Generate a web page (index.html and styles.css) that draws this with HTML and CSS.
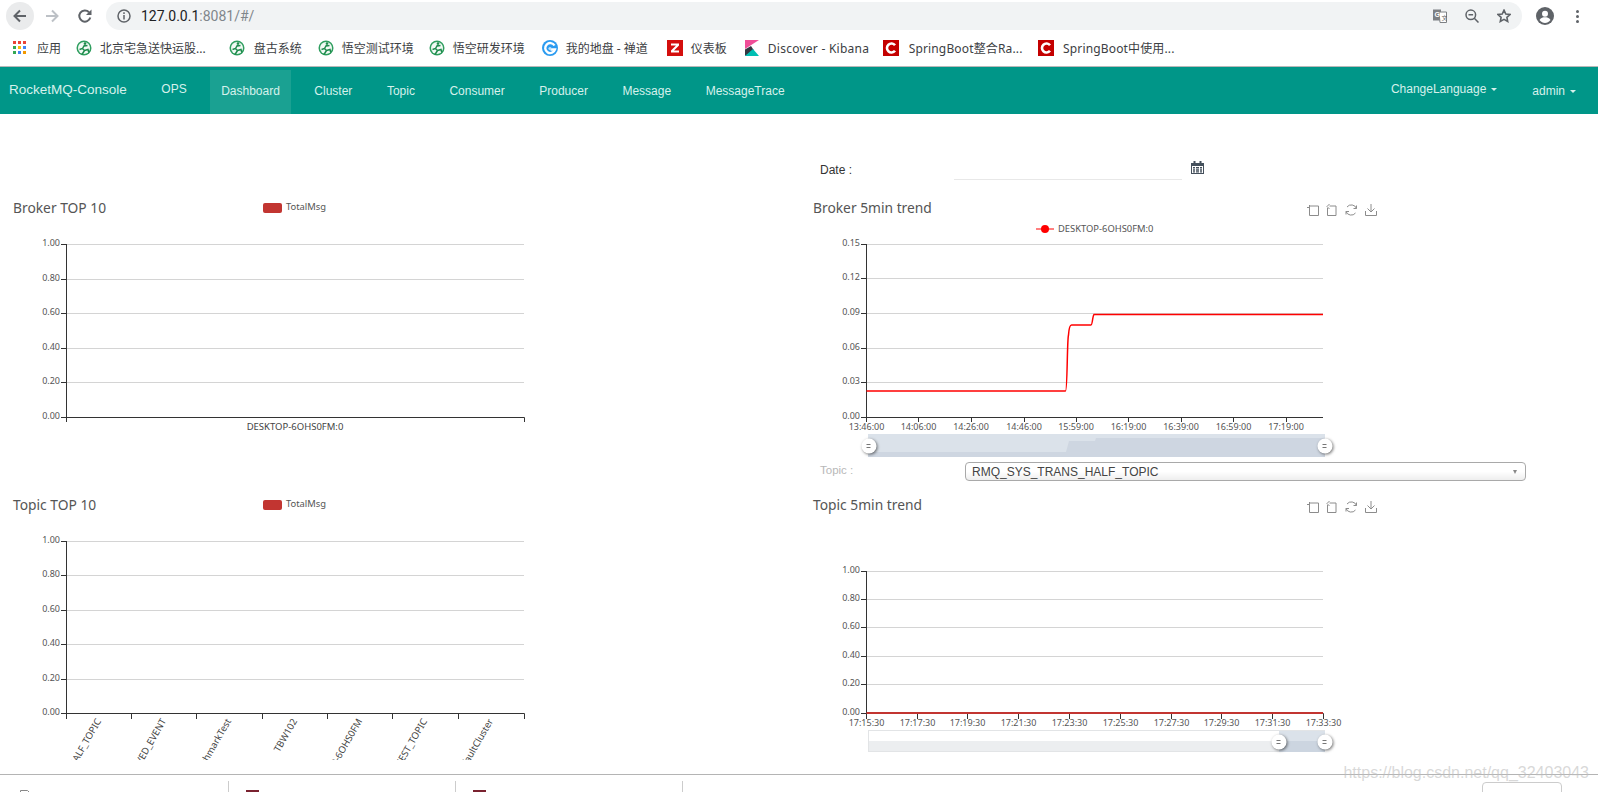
FILE: index.html
```html
<!DOCTYPE html>
<html lang="en">
<head>
<meta charset="utf-8">
<title>RocketMQ-Console</title>
<link rel="stylesheet" href="styles.css">
</head>
<body>
<div class="page">
  <header class="chrome">
    <div class="toolbar">
      <div class="tbtn back"><svg viewBox="0 0 16 16" class="ico16"><path class="s-dark" d="M14 8H3M8 2.500 2.500 8 8 13.500"/></svg></div>
      <div class="tbtn"><svg viewBox="0 0 16 16" class="ico16"><path class="s-light" d="M2 8h11M8 2.500 13.500 8 8 13.500"/></svg></div>
      <div class="tbtn"><svg viewBox="0 0 16 16" class="ico16"><path class="s-dark" d="M13.300 9.500A5.600 5.600 0 1 1 12 4.200"/><path class="f-dark" d="M14.500 1.500v5.500H9z"/></svg></div>
      <div class="address">
        <svg viewBox="0 0 14 14" class="ico14"><circle class="s-thin" cx="7" cy="7" r="6"/><path class="s-thin" d="M7 6v4.500M7 3.300v1.600"/></svg>
        <span class="url">127.0.0.1<span class="url-muted">:8081/#/</span></span>
        <div class="addr-icons">
          <svg viewBox="0 0 14 14" class="ico14"><rect class="f-grey" x="0" y="0.500" width="8" height="11"/><path class="s-grey" d="M6 3h7.500v10.500H7z"/><text x="1.500" y="8" class="tr-g">G</text><text x="8.500" y="10.500" class="tr-x">文</text></svg>
          <svg viewBox="0 0 14 14" class="ico14"><circle class="s-thin" cx="5.800" cy="5.800" r="4.800"/><path class="s-thin" d="M9.300 9.300 13.500 13.500M3.500 5.800h4.600"/></svg>
          <svg viewBox="0 0 14 14" class="ico14"><path class="s-thin2" d="M7 1.200 8.800 5l4.200.5-3.100 2.800.8 4.200L7 10.400l-3.700 2.100.8-4.200L1 5.500 5.200 5z"/></svg>
        </div>
      </div>
      <svg viewBox="0 0 18 18" class="avatar"><circle class="f-dark" cx="9" cy="9" r="9"/><circle class="f-white" cx="9" cy="6.800" r="3"/><path class="f-white" d="M3.500 13c1.500-2.200 3.500-2.700 5.500-2.700s4 .5 5.500 2.700C13 15 11 16 9 16s-4-1-5.500-3z"/></svg>
      <div class="dots"><i></i><i></i><i></i></div>
    </div>
    <div class="bookmarks">
      <div class="bm">
        <svg viewBox="0 0 14 14" class="bm-ico apps">
          <rect x="0" y="0" width="3" height="3" fill="#ea4335"/><rect x="5" y="0" width="3" height="3" fill="#ea4335"/><rect x="10" y="0" width="3" height="3" fill="#ea4335"/>
          <rect x="0" y="5" width="3" height="3" fill="#34a853"/><rect x="5" y="5" width="3" height="3" fill="#fbbc05"/><rect x="10" y="5" width="3" height="3" fill="#4285f4"/>
          <rect x="0" y="10" width="3" height="3" fill="#34a853"/><rect x="5" y="10" width="3" height="3" fill="#4285f4"/><rect x="10" y="10" width="3" height="3" fill="#f29900"/>
        </svg>
        <span>应用</span>
      </div>
      <div class="bm bm-wide">
        <svg class="bm-ico" viewBox="0 0 16 16"><use href="#wk"/></svg>
        <span>北京宅急送快运股...</span>
      </div>
      <div class="bm bm-m2">
        <svg class="bm-ico" viewBox="0 0 16 16"><defs><g id="wk"><circle cx="8" cy="8" r="7.500" fill="#2f9e5f"/><circle cx="8" cy="8" r="6" fill="#f2faf5"/><circle cx="9" cy="3.600" r="1.300" fill="#1f8a4c"/><path d="M8.500 5 6.500 8.500 3.500 9.500M6.500 8.500l2 2-2.500 4M8.500 10.500 12 9.500l.8 3M8 6l3.500-.5" fill="none" stroke="#1f8a4c" stroke-width="1.500"/></g></defs><use href="#wk"/></svg>
        <span class="bm-shift">盘古系统</span>
      </div>
      <div class="bm">
        <svg class="bm-ico" viewBox="0 0 16 16"><use href="#wk"/></svg>
        <span>悟空测试环境</span>
      </div>
      <div class="bm bm-m2">
        <svg class="bm-ico" viewBox="0 0 16 16"><use href="#wk"/></svg>
        <span>悟空研发环境</span>
      </div>
      <div class="bm bm-m2">
        <svg class="bm-ico" viewBox="0 0 16 16"><circle cx="8" cy="8" r="8" fill="#2b9bf0"/><path d="M12.500 5.500A5 5 0 1 0 13 9.500H8.500" fill="none" stroke="#fff" stroke-width="2.400"/><circle cx="8" cy="8.500" r="1.600" fill="#bfe3fb"/></svg>
        <span>我的地盘 - 禅道</span>
      </div>
      <div class="bm bm-gap bm-m1">
        <svg class="bm-ico" viewBox="0 0 16 16"><rect width="16" height="16" fill="#d40e0d"/><path d="M4 3.500h8v2l-5 5h5v2H4v-2l5-5H4z" fill="#fff"/></svg>
        <span>仪表板</span>
      </div>
      <div class="bm bm-gap bm-kibana">
        <svg class="bm-ico kib" viewBox="0 0 14 16"><path d="M0 0h14L0 9z" fill="#f04e98"/><path d="M0 9.500 6 6l3 4.500-9 5.500z" fill="#343741"/><path d="M0 16h14L8 9z" fill="#00bfb3"/></svg>
        <span>Discover - Kibana</span>
      </div>
      <div class="bm bm-spring">
        <svg class="bm-ico" viewBox="0 0 16 16"><rect width="16" height="16" fill="#c40000"/><path d="M12 5.200A4.500 4.500 0 1 0 12 10.800" fill="none" stroke="#fff" stroke-width="2.600"/></svg>
        <span>SpringBoot整合Ra...</span>
      </div>
      <div class="bm bm-spring">
        <svg class="bm-ico" viewBox="0 0 16 16"><rect width="16" height="16" fill="#c40000"/><path d="M12 5.200A4.500 4.500 0 1 0 12 10.800" fill="none" stroke="#fff" stroke-width="2.600"/></svg>
        <span>SpringBoot中使用...</span>
      </div>
    </div>
  </header>

  <nav class="nav">
    <a class="nav-item brand raised">RocketMQ-Console</a>
    <a class="nav-item raised">OPS</a>
    <a class="nav-item active">Dashboard</a>
    <a class="nav-item">Cluster</a>
    <a class="nav-item">Topic</a>
    <a class="nav-item">Consumer</a>
    <a class="nav-item">Producer</a>
    <a class="nav-item">Message</a>
    <a class="nav-item">MessageTrace</a>
    <a class="nav-item raised lang">ChangeLanguage<i class="caret"></i></a>
    <a class="nav-item user">admin<i class="caret"></i></a>
  </nav>

  <main class="dashboard">
    <section class="col col-left">
      <svg class="chart chart-broker" viewBox="0 190 800 300">
        <text class="title" x="13" y="213">Broker TOP 10</text>
        <rect class="swatch" x="263" y="203" width="19" height="10" rx="2"/>
        <text class="legend" x="286" y="210">TotalMsg</text>
        <path class="grid" d="M66 244.500H524M66 279.500H524M66 313.500H524M66 348.500H524M66 382.500H524"/>
        <path class="axis" d="M66.500 244V417.500H524.500V422M61 244.500H66M61 279.500H66M61 313.500H66M61 348.500H66M61 382.500H66M61 417.500H66M66.500 417V422"/>
        <text class="tick end" x="60" y="246">1.00</text>
        <text class="tick end" x="60" y="281">0.80</text>
        <text class="tick end" x="60" y="315">0.60</text>
        <text class="tick end" x="60" y="350">0.40</text>
        <text class="tick end" x="60" y="384">0.20</text>
        <text class="tick end" x="60" y="419">0.00</text>
        <text class="cat mid" x="295" y="429.500">DESKTOP-6OHS0FM:0</text>
      </svg>
      <svg class="chart chart-topic" viewBox="0 490 800 270">
        <text class="title" x="13" y="510">Topic TOP 10</text>
        <rect class="swatch" x="263" y="500" width="19" height="10" rx="2"/>
        <text class="legend" x="286" y="507">TotalMsg</text>
        <path class="grid" d="M66 541.500H524M66 575.500H524M66 610.500H524M66 644.500H524M66 679.500H524"/>
        <path class="axis" d="M66.500 541V713.500H524.500V719M61 541.500H66M61 575.500H66M61 610.500H66M61 644.500H66M61 679.500H66M61 713.500H66M66.500 713V719M131.500 713V719M196.500 713V719M262.500 713V719M327.500 713V719M392.500 713V719M458.500 713V719"/>
        <text class="tick end" x="60" y="543">1.00</text>
        <text class="tick end" x="60" y="577">0.80</text>
        <text class="tick end" x="60" y="612">0.60</text>
        <text class="tick end" x="60" y="646">0.40</text>
        <text class="tick end" x="60" y="681">0.20</text>
        <text class="tick end" x="60" y="715">0.00</text>
        <text class="cat end" transform="translate(101.500 721) rotate(-60)">RMQ_SYS_TRANS_HALF_TOPIC</text>
        <text class="cat end" transform="translate(166.500 721) rotate(-60)">OFFSET_MOVED_EVENT</text>
        <text class="cat end" transform="translate(231.500 721) rotate(-60)">BenchmarkTest</text>
        <text class="cat end" transform="translate(297.500 721) rotate(-60)">TBW102</text>
        <text class="cat end" transform="translate(362.500 721) rotate(-60)">DESKTOP-6OHS0FM</text>
        <text class="cat end" transform="translate(427.500 721) rotate(-60)">SELF_TEST_TOPIC</text>
        <text class="cat end" transform="translate(493.500 721) rotate(-60)">DefaultCluster</text>
      </svg>
    </section>

    <section class="col col-right">
      <div class="date-row">
        <label class="date-label">Date :</label>
        <div class="date-input"></div>
        <svg viewBox="0 0 13 13" class="cal"><path class="f-cal" d="M0 2h2.500V0h2v2h4V0h2v2H13v11H0zM1 5v7h11V5z"/><path class="f-cal" d="M2 6h2v1.500H2zM5 6h3v1.500H5zM9 6h2v1.500H9zM2 8.300h2v1.500H2zM5 8.300h3v1.500H5zM9 8.300h2v1.500H9zM2 10.300h2V11.500H2zM5 10.300h3V11.500H5zM9 10.300h2V11.500H9z"/></svg>
      </div>
      <svg class="chart chart-trend" viewBox="800 190 798 270">
        <defs>
          <g id="tools">
            <path d="M1307 207.500h3M1309.500 205v10.500h9v-9.500h-9"/>
            <path d="M1327.500 208v7.500h8.500v-9.500h-6.500M1329.500 204l-2.500 2.500 2.500 2.500"/>
            <path d="M1347 207a5.500 5.500 0 0 1 9.500 1.500M1355.500 213a5.500 5.500 0 0 1-9.500-1.500M1356.500 205.500v3h-3M1346 214.500v-3h3"/>
            <path d="M1371 204v8M1367.500 208.500l3.500 3.500 3.500-3.500M1365.500 211v4.500h11V211"/>
          </g>
          <g id="handle">
            <circle class="handle-disc" cx="0" cy="0" r="7.500"/>
            <path class="handle-mark" d="M-2.500-1.500h4M-2.500 1.500h4"/>
          </g>
        </defs>
        <text class="title" x="813" y="213">Broker 5min trend</text>
        <use href="#tools" class="tools"/>
        <path class="legend-line" d="M1036 229H1054"/>
        <circle class="dot" cx="1045" cy="229" r="4"/>
        <text class="legend" x="1058" y="232">DESKTOP-6OHS0FM:0</text>
        <path class="grid" d="M866 244.500H1323M866 278.500H1323M866 313.500H1323M866 348.500H1323M866 382.500H1323"/>
        <path class="axis" d="M866.500 244V417.500H1323M861 244.500H866M861 278.500H866M861 313.500H866M861 348.500H866M861 382.500H866M861 417.500H866M866.500 417V422M918.500 417V422M971.500 417V422M1024.500 417V422M1076.500 417V422M1128.500 417V422M1181.500 417V422M1233.500 417V422M1286.500 417V422"/>
        <text class="tick end" x="860" y="246">0.15</text>
        <text class="tick end" x="860" y="280">0.12</text>
        <text class="tick end" x="860" y="315">0.09</text>
        <text class="tick end" x="860" y="350">0.06</text>
        <text class="tick end" x="860" y="384">0.03</text>
        <text class="tick end" x="860" y="419">0.00</text>
        <path class="series" d="M866.500 391H1065.500C1067.500 391 1067 340 1068.500 335C1069 328 1070 325 1071.500 325H1091C1092.500 325 1092.500 316 1094 314.500H1323"/>
        <text class="tick mid" x="866.500" y="430">13:46:00</text>
        <text class="tick mid" x="918.500" y="430">14:06:00</text>
        <text class="tick mid" x="971" y="430">14:26:00</text>
        <text class="tick mid" x="1024" y="430">14:46:00</text>
        <text class="tick mid" x="1076" y="430">15:59:00</text>
        <text class="tick mid" x="1128.500" y="430">16:19:00</text>
        <text class="tick mid" x="1181" y="430">16:39:00</text>
        <text class="tick mid" x="1233.500" y="430">16:59:00</text>
        <text class="tick mid" x="1286" y="430">17:19:00</text>
        <rect class="dz-sel" x="868" y="434" width="457" height="23"/>
        <path class="dz-area" d="M868 452H1066L1069 441H1095L1096 438H1325V457H868z"/>
        <use href="#handle" transform="translate(869 446)"/>
        <use href="#handle" transform="translate(1325 446)"/>
      </svg>
      <div class="select-row">
        <label class="select-label">Topic :</label>
        <div class="select-box">RMQ_SYS_TRANS_HALF_TOPIC<i class="select-arrow"></i></div>
      </div>
      <svg class="chart chart-topic" viewBox="800 490 798 270">
        <text class="title" x="813" y="510">Topic 5min trend</text>
        <use href="#tools" class="tools" transform="translate(0 297)"/>
        <path class="grid" d="M866 571.500H1323M866 599.500H1323M866 627.500H1323M866 656.500H1323M866 684.500H1323"/>
        <path class="axis" d="M866.500 571V713.500H1323.500V719M861 571.500H866M861 599.500H866M861 627.500H866M861 656.500H866M861 684.500H866M861 713.500H866M866.500 713V719M917.500 713V719M967.500 713V719M1018.500 713V719M1069.500 713V719M1120.500 713V719M1171.500 713V719M1221.500 713V719M1272.500 713V719"/>
        <text class="tick end" x="860" y="573">1.00</text>
        <text class="tick end" x="860" y="601">0.80</text>
        <text class="tick end" x="860" y="629">0.60</text>
        <text class="tick end" x="860" y="658">0.40</text>
        <text class="tick end" x="860" y="686">0.20</text>
        <text class="tick end" x="860" y="715">0.00</text>
        <path class="series-flat" d="M866.500 713H1323"/>
        <text class="tick mid" x="866.500" y="726">17:15:30</text>
        <text class="tick mid" x="917.500" y="726">17:17:30</text>
        <text class="tick mid" x="967.500" y="726">17:19:30</text>
        <text class="tick mid" x="1018.500" y="726">17:21:30</text>
        <text class="tick mid" x="1069.500" y="726">17:23:30</text>
        <text class="tick mid" x="1120.500" y="726">17:25:30</text>
        <text class="tick mid" x="1171.500" y="726">17:27:30</text>
        <text class="tick mid" x="1221.500" y="726">17:29:30</text>
        <text class="tick mid" x="1272.500" y="726">17:31:30</text>
        <text class="tick mid" x="1323.500" y="726">17:33:30</text>
        <rect class="dz-frame" x="868.500" y="730.500" width="456" height="21"/>
        <rect class="dz-low" x="869" y="741" width="455" height="10"/>
        <rect class="dz-sel" x="1279" y="731" width="46" height="10"/>
        <rect class="dz-area-flat" x="1279" y="741" width="46" height="11"/>
        <use href="#handle" transform="translate(1279 742)"/>
        <use href="#handle" transform="translate(1325 742)"/>
      </svg>
    </section>
  </main>

  <footer class="downloads">
    <div class="dl dl-first"><svg viewBox="0 0 10 3" class="dl-doc"><path d="M.5 3V.5h7L9.500 2.500V3"/></svg></div>
    <div class="dl"><i class="dl-book"></i></div>
    <div class="dl"><i class="dl-book"></i></div>
    <div class="dl-btn"></div>
  </footer>
  <div class="watermark">https://blog.csdn.net/qq_32403043</div>
</div>
</body>
</html>
```

FILE: styles.css
```css
* { box-sizing: border-box; }
html, body { margin: 0; padding: 0; background: #fff; }
body { font-family: "Liberation Sans", "Noto Sans CJK SC", sans-serif; }
.page { position: relative; width: 1598px; height: 792px; overflow: hidden; display: flex; flex-direction: column; }

/* browser chrome */
.chrome { height: 67px; flex: none; border-bottom: 1px solid #b8b8b8; }
.toolbar { display: flex; align-items: center; height: 32px; padding: 2px 19px 2px 6px; }
.tbtn { width: 28px; height: 28px; border-radius: 50%; display: flex; align-items: center; justify-content: center; margin-right: 4px; flex: none; }
.tbtn.back { background: #eaebec; }
.tbtn:nth-child(3) { margin-right: 7px; margin-left: 1px; }
.ico16 { width: 16px; height: 16px; }
.ico14 { width: 14px; height: 14px; flex: none; }
.s-dark { fill: none; stroke: #5f6368; stroke-width: 2; }
.s-light { fill: none; stroke: #bdc1c6; stroke-width: 2; }
.f-dark { fill: #5f6368; }
.f-white { fill: #fff; }
.f-grey { fill: #7d8084; }
.s-grey { fill: #fff; stroke: #7d8084; stroke-width: 1; }
.s-thin { fill: none; stroke: #5f6368; stroke-width: 1.500; }
.s-thin2 { fill: none; stroke: #5f6368; stroke-width: 1.600; }
.tr-g { font: 700 7px "Liberation Sans", sans-serif; fill: #fff; }
.tr-x { font: 6px "Noto Sans CJK SC", sans-serif; fill: #5f6368; }
.address { flex: 1; height: 28px; border-radius: 14px; background: #f1f3f4; display: flex; align-items: center; padding: 0 11px; }
.url { margin-left: 10px; font: 14px/28px "Roboto", sans-serif; color: #202124; }
.url-muted { color: #80868b; }
.addr-icons { margin-left: auto; display: flex; gap: 18px; }
.avatar { width: 18px; height: 18px; margin-left: 14px; flex: none; }
.dots { margin-left: 22px; display: flex; flex-direction: column; gap: 2px; flex: none; }
.dots i { display: block; width: 3px; height: 3px; border-radius: 50%; background: #5f6368; }

.bookmarks { display: flex; align-items: center; height: 32px; padding-left: 13px; gap: 15px; font: 12px "Noto Sans", "Noto Sans CJK SC", sans-serif; color: #3c4043; white-space: nowrap; }
.bm { display: flex; align-items: center; gap: 8px; }
.bm-ico { width: 16px; height: 16px; flex: none; }
.bm-ico.apps { width: 14px; height: 14px; margin-right: 2px; }
.bm-ico.kib { width: 14px; }
.bm-wide { margin-right: 8px; }
.bm-gap { margin-left: 2px; }
.bm-m1 { margin-right: 1px; }
.bm-m2 { margin-right: 2px; }
.bm-shift { margin-left: 1px; margin-right: -1px; }
.bm-kibana { letter-spacing: .25px; gap: 9px; margin-right: -1px; }
.bm-spring { letter-spacing: .15px; gap: 9.500px; }

/* app nav */
.nav { height: 47px; flex: none; background: #009688; display: flex; align-items: flex-end; gap: 12.500px; padding-left: 9px; font-size: 12px; color: #d6f1ec; white-space: nowrap; }
.nav-item { height: 44px; line-height: 43px; padding: 0 11px; display: block; }
.nav-item.raised { line-height: 39px; }
.brand { padding-left: 0; font-size: 13.500px; }
.active { background: #1aa192; }
.lang { margin-left: auto; padding-right: 12px; }
.user { margin-left: -12.500px; padding: 0 22px 0 23px; }
.caret { display: inline-block; margin-left: 5px; vertical-align: middle; border-top: 3px solid currentColor; border-left: 3px solid transparent; border-right: 3px solid transparent; }

/* dashboard */
.dashboard { height: 660px; flex: none; display: flex; overflow: hidden; }
.col { display: flex; flex-direction: column; flex: none; }
.col-left { width: 800px; padding-top: 76px; }
.col-right { width: 798px; }
.chart { display: block; flex: none; width: 100%; }
.chart-broker { height: 300px; }
.chart-topic { height: 270px; }
.chart-trend { height: 270px; }

.date-row { height: 76px; flex: none; display: flex; align-items: flex-start; padding: 44px 0 0 20px; font-size: 12px; color: #333; }
.date-label { width: 134px; line-height: 24px; }
.date-input { width: 228px; height: 22px; border-bottom: 1px solid #e8e8e8; }
.cal { width: 13px; height: 13px; margin: 3px 0 0 9px; }
.f-cal { fill: #44505c; }

.select-row { height: 30px; flex: none; display: flex; align-items: flex-start; padding: 2px 0 0 20px; }
.select-label { width: 145px; font-size: 11.500px; line-height: 16px; color: #b8b8b8; }
.select-box { position: relative; width: 561px; height: 19px; border: 1px solid #a9a9a9; border-radius: 4px; background: linear-gradient(#fff 50%, #eee); padding-left: 6px; font-size: 12px; line-height: 18px; color: #444; }
.select-arrow { position: absolute; right: 8px; top: 7px; border-top: 4px solid #888; border-left: 2.500px solid transparent; border-right: 2.500px solid transparent; }

/* chart parts */
.title { font: 13.800px "Noto Sans", sans-serif; fill: #555; }
.legend { font: 9.400px "Noto Sans", sans-serif; fill: #555; }
.tick { font: 9px "Noto Sans", sans-serif; fill: #555; }
.cat { font: 9.500px "Noto Sans", sans-serif; fill: #444; }
.end { text-anchor: end; }
.mid { text-anchor: middle; }
.swatch { fill: #c23531; }
.grid { fill: none; stroke: #d4d4d4; stroke-width: 1; }
.axis { fill: none; stroke: #333; stroke-width: 1; }
.series { fill: none; stroke: #f00; stroke-width: 1.500; }
.series-flat { fill: none; stroke: #c23531; stroke-width: 2; }
.legend-line { stroke: #f00; stroke-width: 1; }
.dot { fill: #f00; }
.tools { fill: none; stroke: #8c8c8c; stroke-width: 1; }
.dz-sel { fill: #dbe2ea; }
.dz-area { fill: #ced6e1; }
.dz-frame { fill: #fff; stroke: #e2e4e6; stroke-width: 1; }
.dz-low { fill: #eceef0; }
.dz-area-flat { fill: #ccd5e0; }
.handle-disc { fill: #fff; filter: drop-shadow(1px 1px 1.500px rgba(0, 0, 0, .55)); }
.handle-mark { fill: none; stroke: #777; stroke-width: 1; }

/* downloads bar */
.downloads { flex: 1; border-top: 1px solid #b4b4b4; display: flex; align-items: flex-start; padding-top: 6px; background: #fff; overflow: hidden; }
.dl { width: 227px; height: 30px; border-right: 1px solid #ccc; padding: 9px 0 0 17px; flex: none; }
.dl-first { width: 229px; padding-left: 20px; }
.dl-doc { display: block; width: 10px; height: 3px; fill: none; stroke: #888; }
.dl-book { display: block; width: 13px; height: 4px; background: #7a2230; }
.dl-btn { width: 80px; height: 20px; margin: 1px 36px 0 auto; border: 1px solid #ccc; border-radius: 4px; }

.watermark { position: absolute; right: 9px; top: 763px; font-size: 16px; line-height: 20px; color: rgba(190, 190, 190, .6); }
```
